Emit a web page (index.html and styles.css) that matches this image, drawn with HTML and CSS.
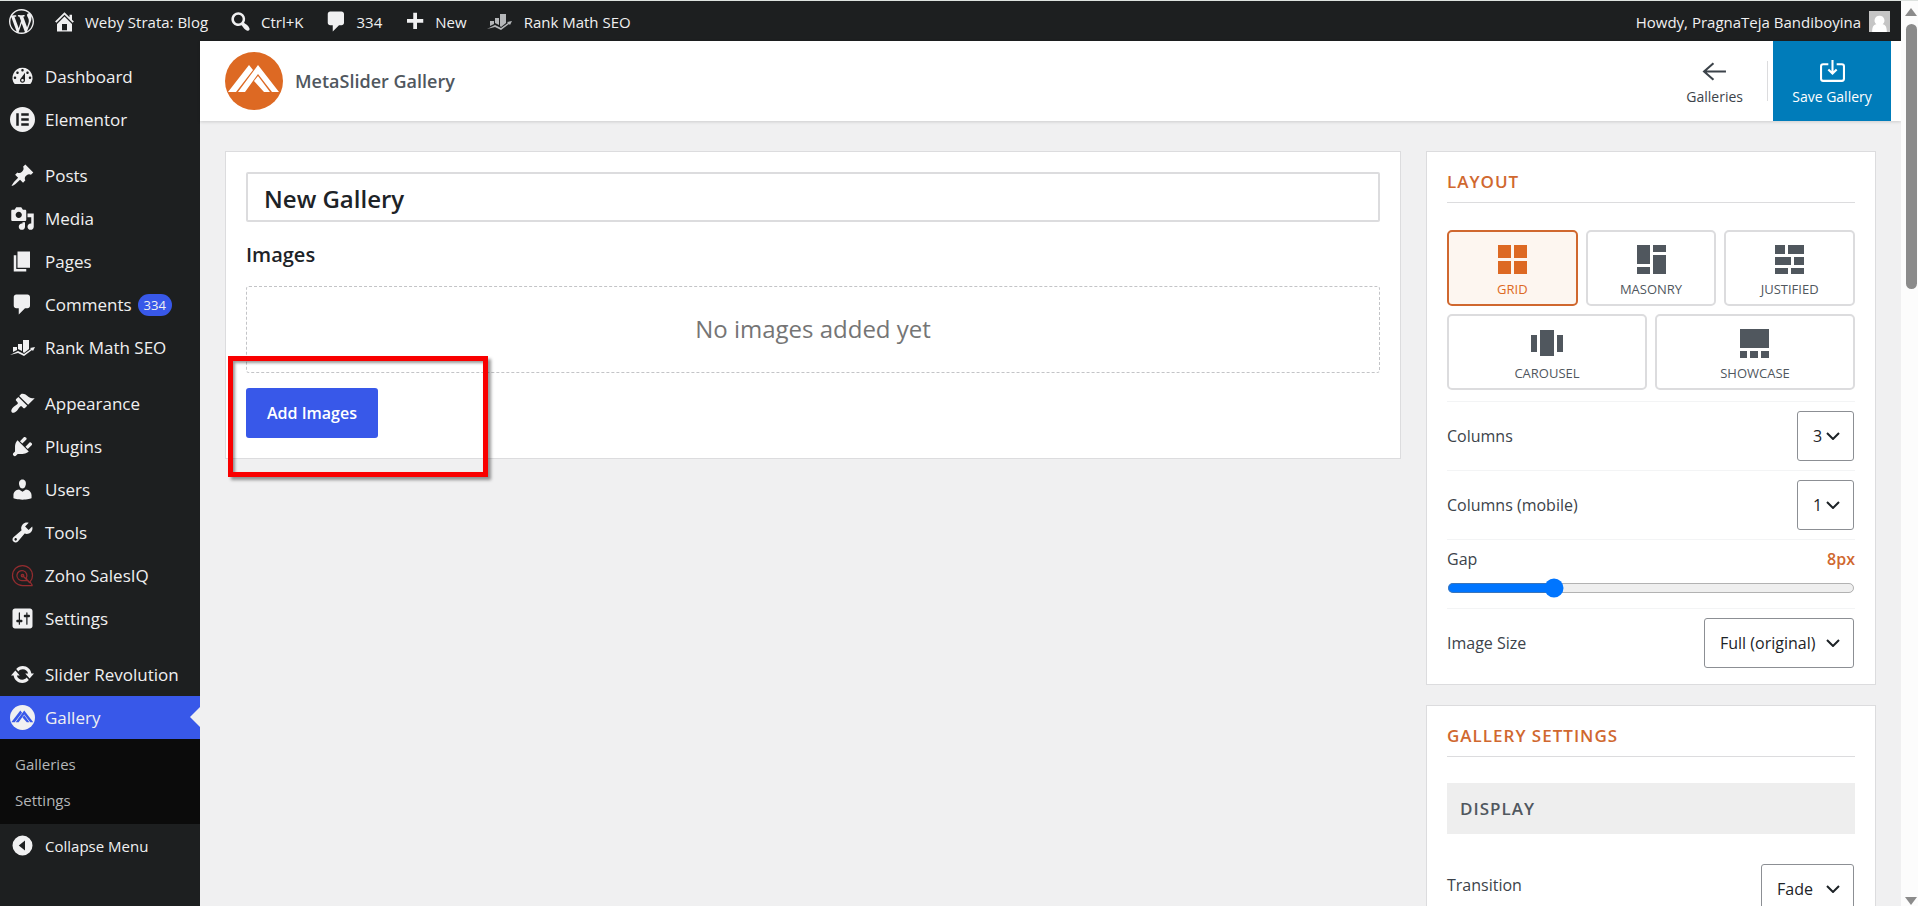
FILE: index.html
```
<!DOCTYPE html>
<html lang="en">
<head>
    <meta charset="UTF-8">
    <meta name="viewport" content="width=device-width, initial-scale=1.0">
    <title>MetaSlider Gallery</title>
    <link rel="stylesheet" href="styles.css">
</head>
<body>
    <!-- Shared icons -->
    <svg class="sprite" aria-hidden="true">
        <symbol id="rank" viewBox="0 0 25 17">
            <path d="M3 8h4v3l-4 2zM8 5h4v7l-4-2zM13 1h6v9l-5 4-1-1z"/>
            <path d="M0 16l8-4 6 3 7-5-1-1 5-1-2 4-1-1-8 6-6-3-8 2z"/>
        </symbol>
        <symbol id="comment" viewBox="0 0 20 20">
            <path d="M5 2h9c1.1 0 2 .9 2 2v7c0 1.1-.9 2-2 2h-2l-5 5v-5H5c-1.1 0-2-.9-2-2V4c0-1.1.9-2 2-2z"/>
        </symbol>
        <symbol id="peaks" viewBox="0 0 58 58">
            <path d="M3 40L24 13l4 5L11 40zM13 40L33 13l21 27h-7L33 22 20 40zM39 40L29 29l4-5 12 16z"/>
        </symbol>
    </svg>

    <div class="page">
        <!-- Top admin bar -->
        <nav class="adminbar">
            <a class="bar-logo" href="#" aria-label="About WordPress"><svg class="icon" viewBox="0 0 20 20"><path d="M20 10c0-5.51-4.49-10-10-10C4.48 0 0 4.49 0 10c0 5.52 4.48 10 10 10 5.51 0 10-4.48 10-10zM7.78 15.37L4.37 6.22c.55-.02 1.17-.08 1.17-.08.5-.06.44-1.13-.06-1.11 0 0-1.45.11-2.37.11-.18 0-.37 0-.58-.01C4.12 2.69 6.87 1.11 10 1.11c2.33 0 4.45.87 6.05 2.34-.68-.11-1.65.39-1.65 1.58 0 .74.45 1.36.9 2.1.35.61.55 1.36.55 2.46 0 1.49-1.4 5-1.4 5l-3.03-8.37c.54-.02.82-.17.82-.17.5-.05.44-1.25-.06-1.22 0 0-1.44.12-2.38.12-.87 0-2.33-.12-2.33-.12-.5-.03-.56 1.2-.06 1.22l.92.08 1.26 3.41zM17.41 10c.24-.64.74-1.87.43-4.25.7 1.29 1.05 2.71 1.05 4.25 0 3.29-1.73 6.24-4.4 7.78.97-2.59 1.94-5.2 2.92-7.78zM6.1 18.09C3.12 16.65 1.11 13.53 1.11 10c0-1.3.23-2.48.72-3.59C3.25 10.3 4.67 14.2 6.1 18.09zm4.03-6.63l2.58 6.98c-.86.29-1.76.45-2.71.45-.79 0-1.57-.11-2.29-.33.81-2.38 1.62-4.74 2.42-7.1z"/></svg></a>
            <a href="#"><svg class="icon" viewBox="0 0 20 20"><path d="M16 8.5l1.53 1.53-1.06 1.06L10 4.6l-6.47 6.49-1.06-1.06L10 2.5l4 4v-2h2v4zm-6-2.46l6 5.99V18H4v-5.97zM12 17v-5H8v5h4z"/></svg><span>Weby Strata: Blog</span></a>
            <a href="#"><svg class="icon" viewBox="0 0 20 20"><path d="M12.14 4.18c1.87 1.87 2.11 4.75.72 6.89.12.1.22.21.36.31.2.16.47.36.81.59.34.24.56.39.66.47.42.31.73.57.94.78.32.32.6.65.84 1 .25.35.44.69.59 1.04.14.35.21.68.18 1-.02.32-.14.59-.36.81s-.49.34-.81.36c-.31.02-.65-.04-.99-.19-.35-.14-.7-.34-1.04-.59-.35-.24-.68-.52-1-.84-.21-.21-.47-.52-.77-.93-.1-.13-.25-.35-.47-.66-.22-.32-.4-.57-.56-.78-.16-.2-.29-.35-.44-.5-2.07 1.09-4.69.76-6.44-.98-2.14-2.15-2.14-5.64 0-7.78 2.15-2.15 5.63-2.15 7.78 0zm-1.41 6.36c1.36-1.37 1.36-3.58 0-4.95-1.37-1.37-3.59-1.37-4.95 0-1.37 1.37-1.37 3.58 0 4.95 1.36 1.37 3.58 1.37 4.95 0z"/></svg><span>Ctrl+K</span></a>
            <a href="#"><svg class="icon"><use href="#comment"/></svg><span>334</span></a>
            <a href="#"><svg class="icon" viewBox="0 0 20 20"><path d="M17 8v3h-5v5H9v-5H4V8h5V3h3v5h5z"/></svg><span>New</span></a>
            <a class="rank-link" href="#"><svg class="icon icon-dim"><use href="#rank"/></svg><span>Rank Math SEO</span></a>
            <a class="account" href="#"><span>Howdy, PragnaTeja Bandiboyina</span><svg class="avatar" viewBox="0 0 20 20"><path fill="#c5c5c5" d="M0 0h20v20H0z"/><path fill="#fff" d="M10 4.500a4.500 4.500 0 0 1 3 8c3 .5 4 3 4 7.500H3c0-4.500 1-7 4-7.500a4.500 4.500 0 0 1 3-8z"/></svg></a>
        </nav>

        <div class="columns">
            <!-- Left menu -->
            <nav class="menu">
                <ul class="menu-list">
                    <li><a href="#"><svg class="icon" viewBox="0 0 20 20"><path fill-rule="evenodd" d="M3.76 16h12.48A7.998 7.998 0 0 0 10 3a7.998 7.998 0 0 0-6.24 13zM10 4c.55 0 1 .45 1 1s-.45 1-1 1-1-.45-1-1 .45-1 1-1zM6 6c.55 0 1 .45 1 1s-.45 1-1 1-1-.45-1-1 .45-1 1-1zm8 0c.55 0 1 .45 1 1s-.45 1-1 1-1-.45-1-1 .45-1 1-1zm-5.37 5.55L12 7v6c0 1.1-.9 2-2 2s-2-.9-2-2c0-.57.24-1.08.63-1.45zM4 10c.55 0 1 .45 1 1s-.45 1-1 1-1-.45-1-1 .45-1 1-1zm12 0c.55 0 1 .45 1 1s-.45 1-1 1-1-.45-1-1 .45-1 1-1zm-5 3c0-.55-.45-1-1-1s-1 .45-1 1 .45 1 1 1 1-.45 1-1z"/></svg>Dashboard</a></li>
                    <li><a href="#"><svg class="icon" viewBox="0 0 20 20"><path fill-rule="evenodd" d="M10 0a10 10 0 1 0 0 20a10 10 0 0 0 0-20zM5 5h2v10H5zM9 5h6v2H9zM9 9h6v2H9zM9 13h6v2H9z"/></svg>Elementor</a></li>
                    <li class="group"><a href="#"><svg class="icon" viewBox="0 0 20 20"><path d="M10.44 3.02l1.82-1.82 6.36 6.35-1.83 1.82c-1.05-.68-2.48-.57-3.41.36l-.75.75c-.92.93-1.04 2.35-.35 3.41l-1.83 1.82-2.41-2.41-2.8 2.79c-.42.42-3.38 2.71-3.8 2.29s1.86-3.39 2.28-3.81l2.79-2.79L4.1 9.36l1.83-1.82c1.05.69 2.48.57 3.4-.36l.75-.75c.93-.92 1.05-2.35.36-3.41z"/></svg>Posts</a></li>
                    <li><a href="#"><svg class="icon" viewBox="0 0 20 20"><path fill-rule="evenodd" d="M13 11V4c0-.55-.45-1-1-1h-1.67L9 1H5L3.67 3H2c-.55 0-1 .45-1 1v7c0 .55.45 1 1 1h10c.55 0 1-.45 1-1zM7 4.5c1.38 0 2.5 1.12 2.5 2.5S8.38 9.5 7 9.5 4.5 8.38 4.5 7 5.62 4.5 7 4.5zM14 6h5v10.5c0 1.38-1.12 2.5-2.5 2.5S14 17.88 14 16.5s1.12-2.5 2.5-2.5c.17 0 .34.02.5.05V9h-3V6zm-4 8.05V13h2v3.5c0 1.38-1.12 2.5-2.5 2.5S7 17.88 7 16.5 8.12 14 9.5 14c.17 0 .34.02.5.05z"/></svg>Media</a></li>
                    <li><a href="#"><svg class="icon" viewBox="0 0 20 20"><path d="M6 15V2h10v13H6zm-1 1h8v2H3V5h2v11z"/></svg>Pages</a></li>
                    <li><a href="#"><svg class="icon"><use href="#comment"/></svg>Comments <span class="count">334</span></a></li>
                    <li><a href="#"><svg class="icon"><use href="#rank"/></svg>Rank Math SEO</a></li>
                    <li class="group"><a href="#"><svg class="icon" viewBox="0 0 20 20"><path d="M14.48 11.06L7.41 3.99l1.5-1.5c.5-.56 2.3-.47 3.51.32 1.21.8 1.43 1.28 2.91 2.1 1.18.64 2.45 1.26 4.45.85zm-.71.71L6.7 4.7 4.93 6.47c-.39.39-.39 1.02 0 1.41l1.06 1.06c.39.39.39 1.03 0 1.42-.6.6-1.43 1.11-2.21 1.69-.35.26-.7.53-1.01.84C1.43 14.23.4 16.08 1.4 17.07c.99 1 2.84-.03 4.18-1.36.31-.31.58-.66.85-1.02.57-.78 1.08-1.61 1.69-2.21.39-.39 1.02-.39 1.41 0l1.06 1.06c.39.39 1.02.39 1.41 0z"/></svg>Appearance</a></li>
                    <li><a href="#"><svg class="icon" viewBox="0 0 20 20"><path d="M13.11 4.36L9.87 7.6 8 5.73l3.24-3.24c.35-.34 1.05-.2 1.56.32.52.51.66 1.21.31 1.55zm-8 1.77l.91-1.12 9.01 9.01-1.19.84c-.71.71-2.63 1.16-3.82 1.16H6.14L4.9 17.26c-.59.59-1.54.59-2.12 0-.59-.58-.59-1.53 0-2.12l1.24-1.24v-3.88c0-1.13.4-3.19 1.09-3.89zm7.26 3.97l3.24-3.24c.34-.35 1.04-.21 1.55.31.52.51.66 1.21.31 1.55l-3.24 3.25z"/></svg>Plugins</a></li>
                    <li><a href="#"><svg class="icon" viewBox="0 0 20 20"><path d="M10 9.25c-2.27 0-2.73-3.44-2.73-3.44C7 4.02 7.82 2 9.97 2c2.16 0 2.98 2.02 2.71 3.81 0 0-.41 3.44-2.68 3.44zm0 2.57L12.72 10c2.39 0 4.52 2.33 4.52 4.53v2.49s-3.65 1.13-7.24 1.13c-3.65 0-7.24-1.13-7.24-1.13v-2.49c0-2.25 1.94-4.48 4.47-4.48z"/></svg>Users</a></li>
                    <li><a href="#"><svg class="icon" viewBox="0 0 20 20"><path d="M16.68 9.77c-1.34 1.34-3.3 1.67-4.95.99l-5.41 6.52c-.99.99-2.59.99-3.58 0s-.99-2.59 0-3.57l6.52-5.42c-.68-1.65-.35-3.61.99-4.95 1.28-1.28 3.12-1.62 4.72-1.06l-2.89 2.89 2.82 2.82 2.86-2.87c.53 1.58.18 3.39-1.08 4.65zM3.81 16.21c.4.39 1.04.39 1.43 0 .4-.4.4-1.04 0-1.43-.39-.4-1.03-.4-1.43 0-.39.39-.39 1.03 0 1.43z"/></svg>Tools</a></li>
                    <li><a href="#"><svg class="icon icon-zoho" viewBox="0 0 20 20"><path d="M18 18h-8a8 8 0 1 1 8-8c0 3-1 4-2 5l2 3M14 14l-1-2a4 4 0 1 0-3 2h5M10 10l6 6"/><circle cx="10" cy="10" r="1"/></svg>Zoho SalesIQ</a></li>
                    <li><a href="#"><svg class="icon" viewBox="0 0 20 20"><path fill-rule="evenodd" d="M18 16V4c0-1.1-.9-2-2-2H4c-1.1 0-2 .9-2 2v12c0 1.1.9 2 2 2h12c1.1 0 2-.9 2-2zM8 11h1c.55 0 1 .45 1 1s-.45 1-1 1H8v1.5c0 .28-.22.5-.5.5s-.5-.22-.5-.5V13H6c-.55 0-1-.45-1-1s.45-1 1-1h1V5.5c0-.28.22-.5.5-.5s.5.22.5.5V11zm5-2h-1c-.55 0-1-.45-1-1s.45-1 1-1h1V5.5c0-.28.22-.5.5-.5s.5.22.5.5V7h1c.55 0 1 .45 1 1s-.45 1-1 1h-1v5.5c0 .28-.22.5-.5.5s-.5-.22-.5-.5V9z"/></svg>Settings</a></li>
                    <li class="group"><a href="#"><svg class="icon" viewBox="0 0 20 20"><path d="M10.2 3.28c3.53 0 6.43 2.61 6.92 6h2.08l-3.5 4-3.5-4h2.32c-.45-1.97-2.21-3.45-4.32-3.45-1.45 0-2.73.71-3.54 1.78L4.95 5.66C6.23 4.2 8.11 3.28 10.2 3.28zm-.4 13.44c-3.52 0-6.43-2.61-6.92-6H.8l3.5-4c1.17 1.33 2.33 2.67 3.5 4H5.48c.45 1.97 2.21 3.45 4.32 3.45 1.45 0 2.73-.71 3.54-1.78l1.71 1.95c-1.28 1.46-3.15 2.38-5.25 2.38z"/></svg>Slider Revolution</a></li>
                    <li class="current"><a href="#"><svg class="icon" viewBox="0 0 58 58"><circle cx="29" cy="29" r="29"/><use class="peaks-blue" href="#peaks"/></svg>Gallery</a></li>
                </ul>
                <ul class="submenu">
                    <li><a href="#">Galleries</a></li>
                    <li><a href="#">Settings</a></li>
                </ul>
                <button class="collapse" type="button"><svg class="icon" viewBox="0 0 20 20"><path fill-rule="evenodd" d="M10 2a8 8 0 1 0 0 16a8 8 0 0 0 0-16zM12 6v8l-5-4z"/></svg>Collapse Menu</button>
            </nav>

            <main class="content">
                <header class="header">
                    <svg class="logo" viewBox="0 0 58 58"><circle cx="29" cy="29" r="29" fill="#dd6923"/><use href="#peaks" fill="#fff"/></svg>
                    <h1 class="title">MetaSlider Gallery</h1>
                    <a class="back" href="#">
                        <svg class="icon-line" viewBox="0 0 24 24"><path d="M23 12H2M11 4l-9 8 9 8"/></svg>
                        <span>Galleries</span>
                    </a>
                    <button class="save" type="button">
                        <svg class="icon-line" viewBox="0 0 24 24"><path d="M8 5H3a2 2 0 0 0-2 2v12a2 2 0 0 0 2 2h18a2 2 0 0 0 2-2V7a2 2 0 0 0-2-2h-5M12 1v13M8 10l4 4 4-4"/></svg>
                        <span>Save Gallery</span>
                    </button>
                </header>

                <div class="workspace">
                    <!-- Gallery editor -->
                    <section class="card editor">
                        <input class="gallery-name" type="text" value="New Gallery" aria-label="Gallery name">
                        <h2 class="images-title">Images</h2>
                        <div class="empty">No images added yet</div>
                        <button class="add" type="button">Add Images</button>
                        <div class="highlight"></div>
                    </section>

                    <div class="side">
                        <section class="card">
                            <h2 class="card-title">Layout</h2>
                            <div class="layouts">
                                <button class="layout active" type="button"><svg class="icon-layout" viewBox="0 0 32 32"><path d="M2 1h13v13H2zM18 1h13v13H18zM2 17h13v13H2zM18 17h13v13H18z"/></svg>Grid</button>
                                <button class="layout" type="button"><svg class="icon-layout" viewBox="0 0 32 32"><path d="M2 1h13v19H2zM18 1h13v7H18zM2 23h13v7H2zM18 11h13v19H18z"/></svg>Masonry</button>
                                <button class="layout" type="button"><svg class="icon-layout" viewBox="0 0 32 32"><path d="M1 1h10v9H1zM14 1h16v9H14zM1 13h16v8H1zM20 13h10v8H20zM1 24h13v6H1zM17 24h13v6H17z"/></svg>Justified</button>
                                <button class="layout wide" type="button"><svg class="icon-layout" viewBox="0 0 32 32"><path d="M0 7h6v17H0zM9 2h14v26H9zM26 7h6v17h-6z"/></svg>Carousel</button>
                                <button class="layout wide" type="button"><svg class="icon-layout" viewBox="0 0 32 32"><path d="M1 1h29v19H1zM1 23h7v7H1zM11 23h8v7H11zM22 23h8v7H22z"/></svg>Showcase</button>
                            </div>
                            <div class="row">
                                <label for="columns">Columns</label>
                                <span class="select narrow"><select id="columns"><option>3</option></select><svg class="chevron" viewBox="0 0 14 8"><path d="M1 1l6 6 6-6"/></svg></span>
                            </div>
                            <div class="row">
                                <label for="columns-mobile">Columns (mobile)</label>
                                <span class="select narrow"><select id="columns-mobile"><option>1</option></select><svg class="chevron" viewBox="0 0 14 8"><path d="M1 1l6 6 6-6"/></svg></span>
                            </div>
                            <div class="row range">
                                <label for="gap">Gap</label>
                                <output for="gap">8px</output>
                                <input id="gap" type="range" min="0" max="32" value="8">
                            </div>
                            <div class="row">
                                <label for="image-size">Image Size</label>
                                <span class="select size"><select id="image-size"><option>Full (original)</option></select><svg class="chevron" viewBox="0 0 14 8"><path d="M1 1l6 6 6-6"/></svg></span>
                            </div>
                        </section>

                        <section class="card">
                            <h2 class="card-title">Gallery Settings</h2>
                            <h3 class="subheading">Display</h3>
                            <div class="row first">
                                <label for="transition">Transition</label>
                                <span class="select effect"><select id="transition"><option>Fade</option></select><svg class="chevron" viewBox="0 0 14 8"><path d="M1 1l6 6 6-6"/></svg></span>
                            </div>
                        </section>
                    </div>
                </div>
            </main>
        </div>
    </div>

    <div class="scrollbar">
        <span class="arrow-up"></span>
        <span class="thumb"></span>
        <span class="arrow-down"></span>
    </div>
</body>
</html>
```
FILE: styles.css
```
* {
    box-sizing: border-box;
}

body {
    display: flex;
    height: 100vh;
    margin: 0;
    border-top: 1px solid #dde2df;
    overflow: hidden;
    background-color: #f0f0f1;
    color: #3c434a;
    font-family: "Segoe UI", "Open Sans", "Noto Sans", sans-serif;
    font-size: 16px;
}

h1, h2, h3, ul {
    margin: 0;
    padding: 0;
}

ul {
    list-style: none;
}

a {
    color: inherit;
    text-decoration: none;
}

button, input, select {
    font-family: inherit;
    cursor: pointer;
}

svg {
    flex: none;
    fill: currentColor;
}

.sprite {
    position: absolute;
    width: 0;
    height: 0;
}

.page {
    display: flex;
    flex: 1;
    flex-direction: column;
    min-width: 0;
}

.icon {
    width: 25px;
    height: 25px;
}

/* Top admin bar */
.adminbar {
    display: flex;
    flex: none;
    align-items: center;
    gap: 20px;
    height: 40px;
    padding: 1px 11px 0 9px;
    background-color: #1d1f20;
    color: #f0f0f1;
    font-size: 15px;
}

.adminbar a {
    display: flex;
    align-items: center;
    gap: 8px;
}

.adminbar .bar-logo {
    margin-right: -2px;
}

.adminbar .rank-link {
    gap: 12px;
}

.icon-dim {
    color: #b5b7b9;
}

.adminbar .account {
    margin-left: auto;
}

.avatar {
    width: 21px;
    height: 21px;
}

/* Left menu */
.columns {
    display: flex;
    flex: 1;
    min-height: 0;
}

.menu {
    flex: none;
    width: 200px;
    padding-top: 14px;
    background-color: #1d1f20;
    color: #f0f0f1;
}

.menu-list a {
    display: flex;
    align-items: center;
    gap: 10px;
    height: 43px;
    padding-left: 10px;
    font-size: 17px;
    white-space: nowrap;
}

.menu-list .group {
    margin-top: 13px;
}

.icon-zoho {
    fill: none;
    stroke: #932c2f;
    stroke-width: 1;
}

.count {
    margin-left: -4px;
    padding: 0 6px;
    border-radius: 11px;
    background-color: #3858e9;
    font-size: 13px;
    line-height: 22px;
}

.current {
    position: relative;
    background-color: #3858e9;
}

.current::after {
    content: "";
    position: absolute;
    top: 11px;
    right: 0;
    border: 10px solid transparent;
    border-left-width: 0;
    border-right-color: #f0f0f1;
}

.peaks-blue {
    fill: #3858e9;
}

.submenu {
    padding: 7px 0 6px;
    background-color: #0b0b0b;
    color: #b4b6b8;
    font-size: 15px;
}

.submenu a {
    display: block;
    padding-left: 15px;
    line-height: 36px;
}

.collapse {
    display: flex;
    align-items: center;
    gap: 10px;
    height: 43px;
    padding: 0 0 0 10px;
    border: 0;
    background: none;
    color: #f0f0f1;
    font-size: 15px;
}

/* Page header */
.content {
    display: flex;
    flex: 1;
    flex-direction: column;
    min-width: 0;
}

.header {
    display: flex;
    flex: none;
    align-items: center;
    height: 80px;
    padding: 0 10px 0 25px;
    background-color: #fff;
    box-shadow: 0 1px 3px rgba(0, 0, 0, 0.15);
}

.logo {
    width: 58px;
    height: 58px;
}

.title {
    margin-left: 12px;
    color: #50575e;
    font-size: 18px;
    font-weight: 600;
}

.back, .save {
    display: flex;
    flex-direction: column;
    align-items: center;
    justify-content: center;
    gap: 3px;
    font-size: 14px;
    line-height: 20px;
}

.back {
    height: 40px;
    margin-left: auto;
    padding: 3px 24px 0;
    border-right: 1px solid #dcdcde;
}

.save {
    width: 118px;
    height: 80px;
    margin-left: 5px;
    padding: 3px 0 0;
    border: 0;
    background-color: #007cba;
    color: #fff;
}

.icon-line {
    width: 25px;
    height: 25px;
    fill: none;
    stroke: currentColor;
    stroke-width: 2;
}

/* Gallery editor */
.workspace {
    display: grid;
    grid-template-columns: minmax(0, 1fr) 450px;
    align-items: start;
    gap: 25px;
    min-height: 0;
    padding: 30px 25px;
}

.card {
    padding: 20px;
    border: 1px solid #dcdcde;
    background-color: #fff;
}

.editor {
    position: relative;
}

.gallery-name {
    display: block;
    width: 100%;
    height: 50px;
    padding: 2px 16px 0;
    border: 2px solid #dcdcde;
    border-radius: 2px;
    color: #1d2327;
    font-size: 24px;
    font-weight: 600;
}

.images-title {
    margin: 19px 0 17px;
    color: #1d2327;
    font-size: 20px;
    font-weight: 600;
    line-height: 28px;
}

.empty {
    height: 87px;
    border: 1px dashed #c3c4c7;
    border-radius: 3px;
    color: #757575;
    font-size: 24px;
    line-height: 83px;
    text-align: center;
}

.add {
    display: block;
    height: 50px;
    margin-top: 15px;
    padding: 0 21px;
    border: 0;
    border-radius: 3px;
    background-color: #3858e9;
    color: #fff;
    font-size: 16px;
    font-weight: 600;
}

.highlight {
    position: absolute;
    top: 204px;
    left: 2px;
    width: 260px;
    height: 121px;
    border: 5px solid #f90000;
    box-shadow: 3px 3px 3px rgba(0, 0, 0, 0.4), inset 2px 2px 3px rgba(0, 0, 0, 0.4);
    pointer-events: none;
}

/* Settings panels */
.side {
    display: flex;
    flex-direction: column;
    gap: 20px;
}

.card-title {
    padding-bottom: 10px;
    border-bottom: 1px solid #dcdcde;
    color: #d0682f;
    font-size: 17px;
    font-weight: 600;
    letter-spacing: 1px;
    line-height: 20px;
    text-transform: uppercase;
}

.layouts {
    display: grid;
    grid-template-columns: repeat(6, 1fr);
    gap: 8px;
    margin: 27px 0 11px;
}

.layout {
    display: flex;
    flex-direction: column;
    grid-column: span 2;
    align-items: center;
    gap: 5px;
    height: 76px;
    padding: 12px 0 0;
    border: 2px solid #dcdcde;
    border-radius: 5px;
    background-color: #fff;
    color: #50575e;
    font-size: 13px;
    line-height: 16px;
    text-transform: uppercase;
}

.layout.wide {
    grid-column: span 3;
}

.layout.active {
    border-color: #d0682f;
    background-color: #fdf6f0;
    color: #dd6923;
}

.icon-layout {
    width: 32px;
    height: 32px;
}

.row {
    display: flex;
    align-items: center;
    justify-content: space-between;
    min-height: 69px;
    border-top: 1px solid #f3f4f5;
}

.row:last-child {
    margin-bottom: -13px;
}

.row.first {
    margin-top: 20px;
    border-top: 0;
}

.row.first label {
    padding-bottom: 8px;
}

.row.range {
    flex-wrap: wrap;
    align-content: center;
}

.range output {
    color: #d0682f;
    font-weight: 600;
}

.range input {
    width: 100%;
    margin: 6px 0 2px;
    zoom: 1.25;
}

.select {
    display: grid;
    align-items: center;
    margin-right: 1px;
}

.select select, .chevron {
    grid-area: 1 / 1;
}

.select select {
    width: 100%;
    height: 50px;
    padding: 0 15px;
    border: 1px solid #8c8f94;
    border-radius: 3px;
    appearance: none;
    background-color: #fff;
    color: #1d2327;
    font-size: 16px;
}

.chevron {
    justify-self: end;
    width: 14px;
    height: 8px;
    margin-right: 14px;
    fill: none;
    stroke: #1d2327;
    stroke-width: 2;
    pointer-events: none;
}

.narrow {
    width: 57px;
}

.size {
    width: 150px;
}

.effect {
    width: 93px;
}

.subheading {
    margin-top: 26px;
    padding: 0 13px;
    background-color: #eee;
    color: #50575e;
    font-size: 17px;
    font-weight: 600;
    letter-spacing: 1px;
    line-height: 51px;
    text-transform: uppercase;
}

/* Window scrollbar */
.scrollbar {
    display: flex;
    flex: none;
    flex-direction: column;
    align-items: center;
    width: 17px;
    padding: 7px 0 1px 3px;
    background-color: #fcfcfc;
}

.arrow-up, .arrow-down {
    border: 6px solid transparent;
}

.arrow-up {
    border-top-width: 0;
    border-bottom: 8px solid #8b8b8b;
}

.thumb {
    width: 11px;
    height: 265px;
    margin: 8px 0 auto;
    border-radius: 6px;
    background-color: #8b8b8b;
}

.arrow-down {
    border-top: 8px solid #8b8b8b;
    border-bottom-width: 0;
}
```
